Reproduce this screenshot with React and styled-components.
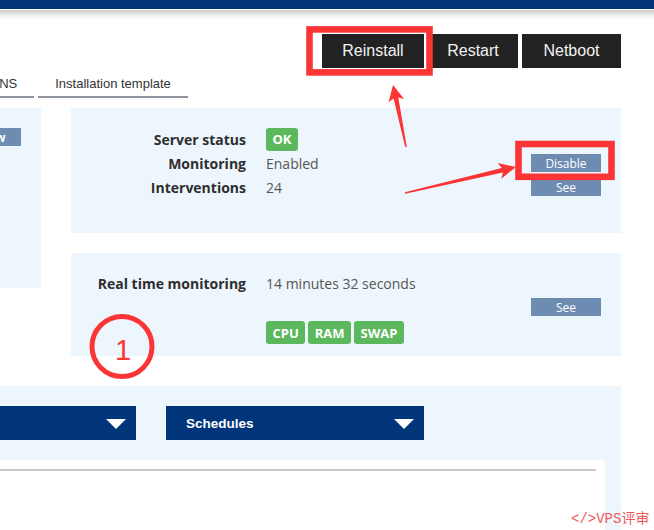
import React from "react";
import styled, { createGlobalStyle } from "styled-components";

const GlobalStyle = createGlobalStyle`
  html, body { margin: 0; padding: 0; background: #ffffff; overflow: hidden; }
  * { box-sizing: border-box; }
`;

const NAVY = "#00357a";
const PANEL = "#eef6fd";
const SLATE = "#6e8cb2";
const GREEN = "#5cb85c";
const MARK = "#fb3535";

const Viewport = styled.div`
  position: relative;
  width: 654px;
  height: 530px;
  overflow: hidden;
  background: #ffffff;
`;

const TopBar = styled.div`
  height: 9px;
  background: ${NAVY};
`;

const ShadowBand = styled.div`
  height: 12px;
  background: linear-gradient(#ffffff 0 1px, #cdcdcd 1px, #f6f6f6 8px, #ffffff 12px);
`;

/* the page is scrolled sideways, so its left edge sits outside the window */
const Page = styled.div`
  width: 814px;
  margin-left: -160px;
  padding-right: 33px;
`;

const Toolbar = styled.div`
  display: flex;
  justify-content: flex-end;
  gap: 4px;
  padding-top: 13px;
`;

const ActionButton = styled.button`
  width: ${(p) => p.$w}px;
  height: 34px;
  border: 0;
  margin: 0;
  padding: 0;
  background: #222222;
  color: #f2f2f2;
  font-family: "Liberation Sans", Arial, sans-serif;
  font-size: 16px;
  display: flex;
  align-items: center;
  justify-content: center;
`;

const Tabs = styled.div`
  display: flex;
  gap: 4px;
  margin-top: 6px;
  padding-left: 67px;
`;

const Tab = styled.div`
  font-family: "Liberation Sans", Arial, sans-serif;
  font-size: 13px;
  line-height: 20px;
  color: #333333;
  padding: 0 17px 2px;
  border-bottom: 2px solid #8e959c;
`;

const Columns = styled.div`
  display: grid;
  grid-template-columns: 201px 550px;
  column-gap: 30px;
  margin-top: 10px;
  align-items: start;
`;

const SidePanel = styled.div`
  height: 180px;
  background: ${PANEL};
  padding: 20px 20px 0 0;
  display: flex;
  justify-content: flex-end;
  align-items: flex-start;
`;

const SideButton = styled.div`
  width: 60px;
  height: 18px;
  background: ${SLATE};
  color: #ffffff;
  font-family: "Open Sans", sans-serif;
  font-weight: 700;
  font-size: 12px;
  display: flex;
  align-items: center;
  justify-content: center;
`;

const MainColumn = styled.div`
  display: flex;
  flex-direction: column;
  gap: 20px;
`;

const InfoPanel = styled.div`
  background: ${PANEL};
  padding: ${(p) => p.$pad};
  display: grid;
  grid-template-columns: 175px 1fr 70px;
  grid-auto-rows: minmax(24px, auto);
  column-gap: 20px;
  align-items: center;
  font-family: "Open Sans", sans-serif;
  font-size: 14px;
`;

const Label = styled.div`
  text-align: right;
  font-weight: 700;
  color: #2e2e2e;
  white-space: nowrap;
`;

const Value = styled.div`
  color: #555555;
  white-space: nowrap;
`;

const Cell = styled.div`
  align-self: ${(p) => p.$self || "center"};
  margin-top: ${(p) => p.$mt || 0}px;
`;

const SmallButton = styled.div`
  width: 70px;
  height: 18px;
  background: ${SLATE};
  color: #ffffff;
  font-family: "Open Sans", sans-serif;
  font-size: 12px;
  display: flex;
  align-items: center;
  justify-content: center;
`;

const BadgeRow = styled.div`
  display: flex;
  gap: 3px;
`;

const Badge = styled.span`
  display: inline-flex;
  align-items: center;
  height: 23px;
  padding: 0 6.5px;
  border-radius: 3px;
  background: ${GREEN};
  color: #ffffff;
  font-family: "Open Sans", sans-serif;
  font-weight: 700;
  font-size: 13px;
`;

const WidePanel = styled.div`
  margin-top: 30px;
  background: ${PANEL};
  padding: 20px 16px 0 38px;
`;

const DropdownRow = styled.div`
  display: flex;
  gap: 30px;
`;

const Dropdown = styled.div`
  width: 258px;
  height: 34px;
  background: ${NAVY};
  color: #ffffff;
  padding: 0 10px 0 20px;
  display: flex;
  align-items: center;
  justify-content: space-between;
  font-family: "Liberation Sans", Arial, sans-serif;
  font-weight: 700;
  font-size: 13.5px;
`;

const Caret = styled.span`
  width: 0;
  height: 0;
  margin-top: 2px;
  border-left: 10px solid transparent;
  border-right: 10px solid transparent;
  border-top: 10px solid #ffffff;
`;

const Card = styled.div`
  margin-top: 20px;
  height: 120px;
  background: #ffffff;
  border-radius: 5px;
  padding: 9px 9px 0;
`;

const CardRule = styled.div`
  border-top: 2px solid #c9c9c9;
`;

const Overlay = styled.svg`
  position: absolute;
  left: 0;
  top: 0;
  pointer-events: none;
`;

const Watermark = styled.div`
  position: absolute;
  left: 571px;
  top: 511px;
  line-height: 16px;
  font-family: "Liberation Mono", "Noto Sans CJK SC", monospace;
  font-size: 14px;
  color: #f25858;
  white-space: nowrap;
`;

function Annotations() {
  return (
    <Overlay width="654" height="530" viewBox="0 0 654 530">
      <rect x="309.5" y="29.4" width="120" height="43" fill="none" stroke={MARK} strokeWidth="6.6" />
      <rect x="518.5" y="144" width="93" height="32.8" fill="none" stroke={MARK} strokeWidth="6.6" />
      {/* arrow pointing up at the reinstall button */}
      <polygon
        fill={MARK}
        points="393,85 404.1,99.1 398.3,97.4 406.8,147 405.2,147 393.6,98.4 388.5,102.3"
      />
      {/* arrow pointing right at the disable button */}
      <polygon
        fill={MARK}
        points="516,167 501.2,178.7 503,172.4 405.2,193.8 404.8,192.2 501.8,168 497.6,163.1"
      />
      <circle cx="122" cy="346.5" r="30" fill="none" stroke={MARK} strokeWidth="5" />
      <text
        x="123"
        y="360"
        textAnchor="middle"
        fill={MARK}
        fontFamily="Liberation Sans, Arial, sans-serif"
        fontSize="29"
      >
        1
      </text>
    </Overlay>
  );
}

export default function App() {
  return (
    <Viewport>
      <GlobalStyle />
      <TopBar />
      <ShadowBand />
      <Page>
        <Toolbar>
          <ActionButton $w={102}>Reinstall</ActionButton>
          <ActionButton $w={90}>Restart</ActionButton>
          <ActionButton $w={99}>Netboot</ActionButton>
        </Toolbar>

        <Tabs>
          <Tab>Secondary DNS</Tab>
          <Tab>Installation template</Tab>
        </Tabs>

        <Columns>
          <SidePanel>
            <SideButton>View</SideButton>
          </SidePanel>

          <MainColumn>
            <InfoPanel $pad="19px 20px 34px 0">
              <Label>Server status</Label>
              <Cell>
                <Badge>OK</Badge>
              </Cell>
              <Cell />

              <Label>Monitoring</Label>
              <Value>Enabled</Value>
              <SmallButton>Disable</SmallButton>

              <Label>Interventions</Label>
              <Value>24</Value>
              <SmallButton>See</SmallButton>
            </InfoPanel>

            <InfoPanel $pad="18px 20px 12px 0">
              <Label>Real time monitoring</Label>
              <Value>14 minutes 32 seconds</Value>
              <Cell />

              <Cell />
              <Cell $self="start" $mt={26}>
                <BadgeRow>
                  <Badge>CPU</Badge>
                  <Badge>RAM</Badge>
                  <Badge>SWAP</Badge>
                </BadgeRow>
              </Cell>
              <Cell $self="start" $mt={3}>
                <SmallButton>See</SmallButton>
              </Cell>
            </InfoPanel>
          </MainColumn>
        </Columns>

        <WidePanel>
          <DropdownRow>
            <Dropdown>
              Tasks
              <Caret />
            </Dropdown>
            <Dropdown>
              Schedules
              <Caret />
            </Dropdown>
          </DropdownRow>
          <Card>
            <CardRule />
          </Card>
        </WidePanel>
      </Page>

      <Annotations />
      <Watermark>&lt;/&gt;VPS评审</Watermark>
    </Viewport>
  );
}
